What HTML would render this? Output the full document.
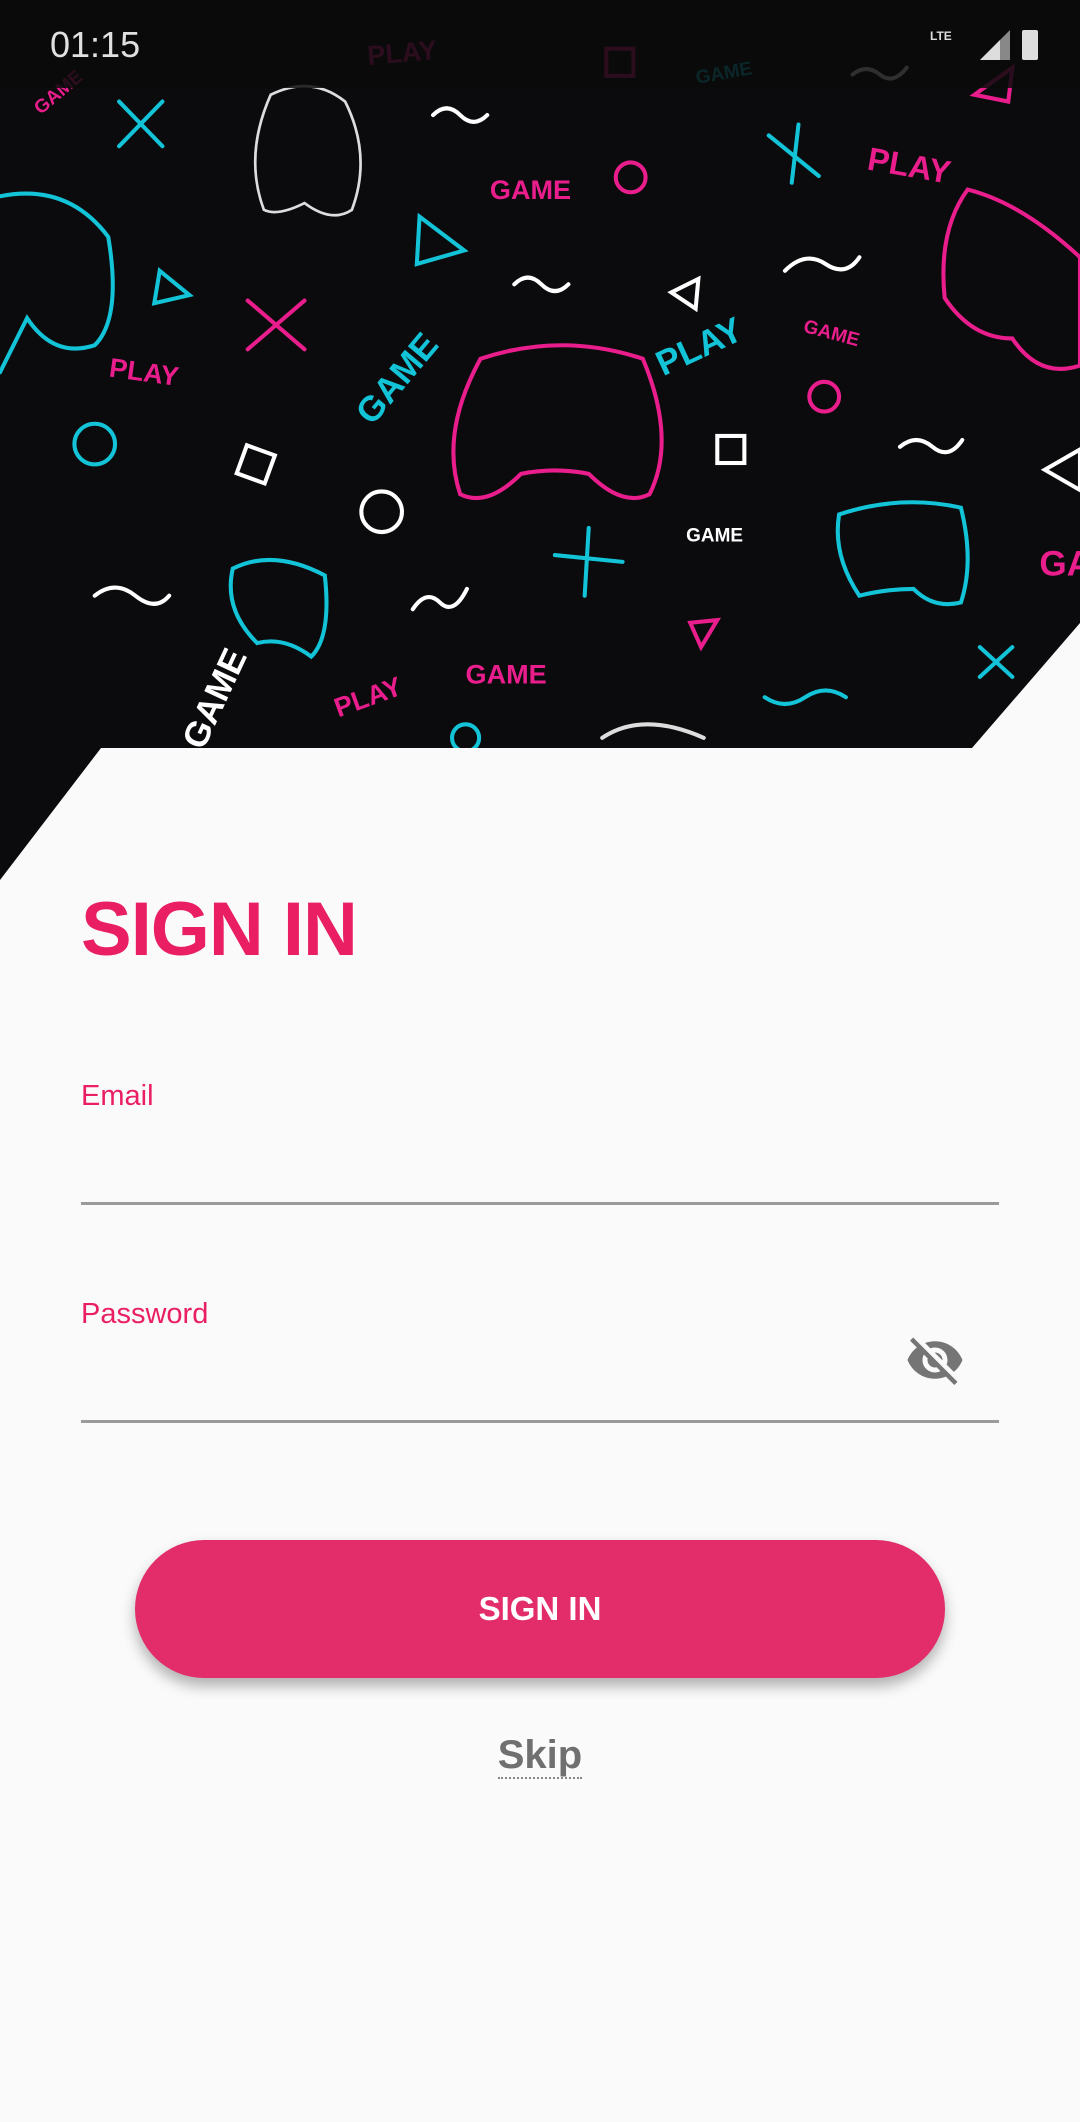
<!DOCTYPE html>
<html><head><meta charset="utf-8"><style>
html,body{margin:0;padding:0;}
body{width:1080px;height:2122px;background:#fafafa;position:relative;overflow:hidden;font-family:"Liberation Sans",Roboto,sans-serif;}
.bg{position:absolute;left:0;top:0;width:1080px;height:880px;}
.status{position:absolute;left:0;top:0;width:1080px;height:88px;background:rgba(10,10,10,0.85);}
.time{position:absolute;left:50px;top:24px;color:#e0e0e0;font-size:36px;}
h1{position:absolute;left:81px;top:886px;margin:0;color:#e91e63;font-size:76px;font-weight:bold;letter-spacing:-1px;}
.lbl{position:absolute;left:81px;color:#e91e63;font-size:29px;}
.line{position:absolute;left:81px;width:918px;height:3px;background:#9a9a9a;}
.btn{position:absolute;left:135px;top:1540px;width:810px;height:138px;border-radius:69px;background:#e32c6a;box-shadow:0 8px 14px rgba(0,0,0,0.3);color:#fff;font-weight:bold;font-size:33px;text-align:center;line-height:138px;}
.skip{position:absolute;left:0;width:1080px;top:1733px;text-align:center;}
.skip span{color:#707070;font-weight:bold;font-size:40px;border-bottom:2px dotted #888;line-height:44px;display:inline-block;}
</style></head><body>
<svg class="bg" viewBox="0 0 798 650" preserveAspectRatio="none">
<rect width="798" height="650" fill="#0b0b0d"/>
<g fill="none" stroke-width="3" stroke-linecap="round">
<path d="M88 75 L120 108 M120 75 L88 108" stroke="#13c4d8"/>
<path d="M183 222 L225 258 M225 222 L183 258" stroke="#e91e8c"/>
<path d="M568 100 L605 130 M590 92 L585 135" stroke="#13c4d8"/>
<path d="M410 410 L460 415 M435 390 L432 440" stroke="#13c4d8"/>
<path d="M724 478 L748 500 M748 478 L724 500" stroke="#13c4d8"/>
<circle cx="466" cy="131" r="11" stroke="#e91e8c"/>
<circle cx="609" cy="293" r="11" stroke="#e91e8c"/>
<circle cx="70" cy="328" r="15" stroke="#13c4d8"/>
<circle cx="282" cy="378" r="15" stroke="#fff"/>
<circle cx="344" cy="545" r="10" stroke="#13c4d8"/>
<path d="M310 160 L343 185 L308 195 Z" stroke="#13c4d8"/>
<path d="M118 200 L140 218 L114 224 Z" stroke="#13c4d8"/>
<path d="M720 70 L748 50 L745 75 Z" stroke="#e91e8c"/>
<path d="M496 216 L516 206 L514 228 Z" stroke="#fff"/>
<path d="M510 460 L530 458 L518 478 Z" stroke="#e91e8c"/>
<path d="M772 347 L798 332 L798 362 Z" stroke="#fff"/>
<rect x="448" y="36" width="20" height="20" stroke="#e91e8c"/>
<rect x="530" y="322" width="20" height="20" stroke="#fff"/>
<rect x="178" y="332" width="22" height="22" stroke="#fff" transform="rotate(20 189 343)"/>
<path d="M320 85 q10 -10 20 0 t20 0" stroke="#fff"/>
<path d="M380 210 q10 -10 20 0 t20 0" stroke="#fff"/>
<path d="M580 200 q15 -15 30 -5 t25 -5" stroke="#fff"/>
<path d="M665 330 q12 -10 24 0 t22 -5" stroke="#fff"/>
<path d="M70 440 q15 -12 30 0 t25 0" stroke="#fff"/>
<path d="M305 450 q10 -15 20 -5 t20 -10" stroke="#fff"/>
<path d="M565 515 q15 10 30 0 t30 0" stroke="#13c4d8"/>
<path d="M630 55 q10 -8 20 0 t20 -5" stroke="#fff"/>
<path d="M200 70 q30 -15 55 5 q20 40 5 80 q-15 10 -35 -5 q-20 10 -30 5 q-15 -40 5 -85z" stroke="#ddd" stroke-width="2"/>
<path d="M355 265 q60 -20 120 0 q25 60 5 100 q-20 10 -45 -15 q-25 -5 -50 0 q-25 25 -45 15 q-15 -45 15 -100z" stroke="#e91e8c"/>
<path d="M0 145 q50 -10 80 30 q10 60 -10 80 q-30 10 -50 -20 q-20 40 -20 40" stroke="#13c4d8"/>
<path d="M715 140 q40 10 83 50 l0 80 q-30 10 -50 -20 q-30 0 -50 -30 q-5 -50 17 -80z" stroke="#e91e8c"/>
<path d="M620 380 q45 -15 90 -5 q10 40 0 70 q-20 5 -35 -10 q-20 0 -40 5 q-20 -30 -15 -60z" stroke="#13c4d8"/>
<path d="M172 420 q30 -15 68 5 q5 45 -10 60 q-20 -15 -40 -10 q-25 -25 -18 -55z" stroke="#13c4d8"/>
<path d="M445 545 q30 -20 75 0" stroke="#ddd"/>
</g>
<g font-family="Liberation Sans,sans-serif" font-weight="bold" font-size="20">
<text x="362" y="147" fill="#e91e8c">GAME</text>
<text x="640" y="125" fill="#e91e8c" font-size="24" transform="rotate(10 640 125)">PLAY</text>
<text x="80" y="278" fill="#e91e8c" transform="rotate(8 80 278)">PLAY</text>
<text x="272" y="48" fill="#e91e8c" transform="rotate(-5 272 48)">PLAY</text>
<text x="490" y="278" fill="#13c4d8" font-size="26" transform="rotate(-25 490 278)">PLAY</text>
<text x="275" y="315" fill="#13c4d8" font-size="26" transform="rotate(-50 275 315)">GAME</text>
<text x="344" y="505" fill="#e91e8c">GAME</text>
<text x="250" y="530" fill="#e91e8c" transform="rotate(-20 250 530)">PLAY</text>
<text x="150" y="555" fill="#fff" font-size="26" transform="rotate(-65 150 555)">GAME</text>
<text x="507" y="400" fill="#fff" font-size="14">GAME</text>
<text x="593" y="245" fill="#e91e8c" font-size="14" transform="rotate(15 593 245)">GAME</text>
<text x="515" y="62" fill="#13c4d8" font-size="14" transform="rotate(-10 515 62)">GAME</text>
<text x="768" y="425" fill="#e91e8c" font-size="26">GA</text>
<text x="30" y="85" fill="#e91e8c" font-size="14" transform="rotate(-40 30 85)">GAME</text>
</g>
</svg>
<svg style="position:absolute;left:0;top:0" width="1080" height="2122">
<polygon points="0,880 101,748 972,748 1080,623 1080,2122 0,2122" fill="#fafafa"/>
</svg>
<div class="status"><div class="time">01:15</div>
<svg style="position:absolute;right:40px;top:26px" width="110" height="36">
<text x="0" y="14" fill="#ddd" font-size="12" font-weight="bold" font-family="Liberation Sans">LTE</text>
<path d="M50 34 L80 4 L80 34 Z" fill="#888"/><path d="M50 34 L70 14 L70 34Z" fill="#ddd"/>
<rect x="92" y="4" width="16" height="30" rx="2" fill="#ddd"/>
</svg></div>
<h1>SIGN IN</h1>
<div class="lbl" style="top:1080px">Email</div>
<div class="line" style="top:1202px"></div>
<div class="lbl" style="top:1298px">Password</div>
<svg style="position:absolute;left:905px;top:1330px" width="60" height="60" viewBox="0 0 24 24">
<path fill="#757575" d="M12 7c2.76 0 5 2.240 5 5 0 .65-.13 1.26-.36 1.83l2.92 2.920c1.51-1.26 2.7-2.89 3.43-4.75-1.73-4.39-6-7.5-11-7.5-1.4 0-2.74.25-3.980.7l2.16 2.16C10.74 7.13 11.35 7 12 7zM2 4.27l2.28 2.28.46.46C3.08 8.3 1.78 10.02 1 12c1.73 4.39 6 7.5 11 7.5 1.55 0 3.03-.3 4.38-.84l.42.42L19.73 22 21 20.73 3.27 3 2 4.27zM7.53 9.8l1.55 1.55c-.05.21-.08.43-.08.65 0 1.66 1.34 3 3 3 .22 0 .44-.03.65-.08l1.55 1.55c-.67.33-1.41.53-2.2.53-2.76 0-5-2.24-5-5 0-.79.2-1.53.53-2.2zm4.31-.78l3.15 3.15.02-.16c0-1.66-1.34-3-3-3l-.17.01z"/>
</svg>
<div class="line" style="top:1420px"></div>
<div class="btn">SIGN IN</div>
<div class="skip"><span>Skip</span></div>
</body></html>
